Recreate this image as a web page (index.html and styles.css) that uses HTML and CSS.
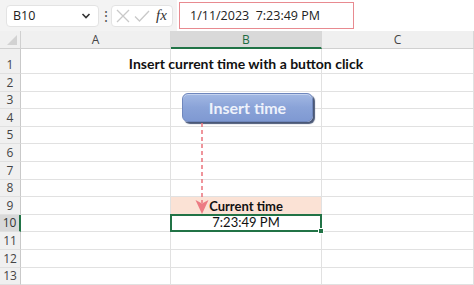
FILE: index.html
```html
<!DOCTYPE html>
<html>
<head>
<meta charset="utf-8">
<link rel="stylesheet" href="styles.css">
</head>
<body>
<div class="app">
  <div class="toolbar">
    <div class="namebox">
      <span class="ref">B10</span>
      <svg class="chev" width="10" height="8" viewBox="0 0 10 8"><path d="M1.5 2 L5 5.5 L8.5 2" fill="none" stroke="#333" stroke-width="1.6"/></svg>
    </div>
    <div class="dots">⋮</div>
    <div class="fbtns">
      <svg width="16" height="16" viewBox="0 0 16 16"><path d="M2 2 L14 14 M14 2 L2 14" stroke="#c9c9c9" stroke-width="1.3" fill="none"/></svg>
      <svg width="18" height="16" viewBox="0 0 18 16"><path d="M2 8.5 L6.5 13 L16 3" stroke="#c9c9c9" stroke-width="1.3" fill="none"/></svg>
      <span class="fx">fx</span>
    </div>
    <div class="formula">
      <div class="fvalue">1/11/2023&nbsp;&nbsp;7:23:49 PM</div>
    </div>
  </div>
  <div class="sheet">
    <div class="corner"><svg width="12" height="12" viewBox="0 0 12 12"><path d="M11 1 L11 11 L1 11 Z" fill="#d2d2d2"/></svg></div>
    <div class="colh">A</div>
    <div class="colh sel">B</div>
    <div class="colh">C</div>

    <div class="rowh r1">1</div><div class="c r1"></div><div class="c r1 title"><span>Insert current time with a button click</span></div><div class="c r1"></div>
    <div class="rowh">2</div><div class="c"></div><div class="c"></div><div class="c"></div>
    <div class="rowh">3</div><div class="c"></div><div class="c"></div><div class="c"></div>
    <div class="rowh">4</div><div class="c"></div><div class="c"></div><div class="c"></div>
    <div class="rowh">5</div><div class="c"></div><div class="c"></div><div class="c"></div>
    <div class="rowh">6</div><div class="c"></div><div class="c"></div><div class="c"></div>
    <div class="rowh">7</div><div class="c"></div><div class="c"></div><div class="c"></div>
    <div class="rowh">8</div><div class="c"></div><div class="c"></div><div class="c"></div>
    <div class="rowh">9</div><div class="c"></div><div class="c hdr">Current time</div><div class="c"></div>
    <div class="rowh selrow">10</div><div class="c"></div><div class="c active">7:23:49 PM<span class="handle"></span></div><div class="c"></div>
    <div class="rowh">11</div><div class="c"></div><div class="c"></div><div class="c"></div>
    <div class="rowh">12</div><div class="c"></div><div class="c"></div><div class="c"></div>
    <div class="rowh">13</div><div class="c"></div><div class="c"></div><div class="c"></div>

    <div class="button">Insert time</div>
    <svg class="arrow" width="14" height="92" viewBox="0 0 14 92">
      <path d="M7 0 L7 80" stroke="#ec7b83" stroke-width="1.6" stroke-dasharray="4 3" fill="none"/>
      <path d="M0.5 77 L7 91 L13.5 77 L7 80.5 Z" fill="#ec7b83"/>
    </svg>
  </div>
</div>
</body>
</html>
```
FILE: styles.css
```css
* { box-sizing: border-box; }
html, body { margin: 0; padding: 0; }
body { width: 474px; height: 285px; overflow: hidden; background: #fff; font-family: "Open Sans", "Noto Sans", sans-serif; }
.app { display: flex; flex-direction: column; width: 474px; height: 285px; }

.toolbar { height: 31px; background: #f3f3f3; display: flex; align-items: center; position: relative; }
.namebox { margin-left: 6px; width: 93px; height: 22px; background: #fff; border: 1px solid #e3e3e3; border-radius: 4px; display: flex; align-items: center; justify-content: space-between; padding: 0 7px 0 6px; }
.ref { font-size: 12.5px; color: #222; }
.dots { width: 12px; text-align: center; font-size: 14px; color: #555; }
.fbtns { width: 62px; height: 22px; background: #fff; border: 1px solid #e3e3e3; border-radius: 4px; display: flex; align-items: center; gap: 2px; padding: 0 3px; }
.fx { font-family: "Liberation Serif", serif; font-style: italic; font-size: 15px; color: #333; margin-left: 3px; }
.formula { flex: 1; height: 31px; margin-left: 4px; background: #fff; display: flex; align-items: center; padding-left: 2px; }
.fvalue { width: 175px; height: 27px; border: 1.5px solid #e88a90; background: #fff; font-size: 12.5px; color: #222; display: flex; align-items: center; padding-left: 10px; }

.sheet { position: relative; display: grid; grid-template-columns: 21px 150px 151px 1fr; grid-template-rows: 18px 25px repeat(12, 17.6px); background: #fff; }
.corner { background: #f0f0f0; border-right: 1px solid #d0d0d0; border-bottom: 1px solid #d0d0d0; display: flex; align-items: flex-end; justify-content: flex-end; padding: 0 2px 2px 0; }
.colh { background: #f0f0f0; border-right: 1px solid #d8d8d8; border-bottom: 1px solid #d0d0d0; font-size: 12px; color: #444; display: flex; align-items: center; justify-content: center; }
.colh.sel { background: #d9d9d9; color: #1e6b41; border-bottom: 2px solid #217346; }
.rowh { background: #f0f0f0; border-right: 1px solid #c9c9c9; border-bottom: 1px solid #e0e0e0; font-size: 12px; color: #444; display: flex; align-items: flex-end; justify-content: center; line-height: 16px; }
.rowh.selrow { background: #d9d9d9; border-right: 2px solid #217346; color: #333; }
.c { border-right: 1px solid #e1e1e1; border-bottom: 1px solid #e1e1e1; font-family: "Lato", "Liberation Sans", sans-serif; font-size: 13px; color: #111; display: flex; align-items: flex-end; justify-content: center; line-height: 16px; }
.c.title { overflow: visible; white-space: nowrap; font-weight: bold; font-size: 14px; position: relative; z-index: 1; padding-bottom: 1px; }
.c.hdr { background: #fbe2d5; font-weight: bold; }
.c.active { position: relative; border: 2px solid #217346; margin: -1px 0 0 -1px; }
.handle { position: absolute; right: -4px; bottom: -4px; width: 6px; height: 6px; background: #217346; border: 1px solid #fff; }

.button { position: absolute; left: 182px; top: 62px; width: 131px; height: 29px; border-radius: 6px; background: linear-gradient(#a2b8e3, #8aa3d8 50%, #7f99d2); border: 1px solid #6f87bd; box-shadow: 2px 2px 1px #4a5877, inset 0 1px 0 #c5d3ef; color: #eef2fb; font-family: "Lato", sans-serif; font-weight: bold; font-size: 16px; display: flex; align-items: center; justify-content: center; }
.arrow { position: absolute; left: 195px; top: 92px; }
```
